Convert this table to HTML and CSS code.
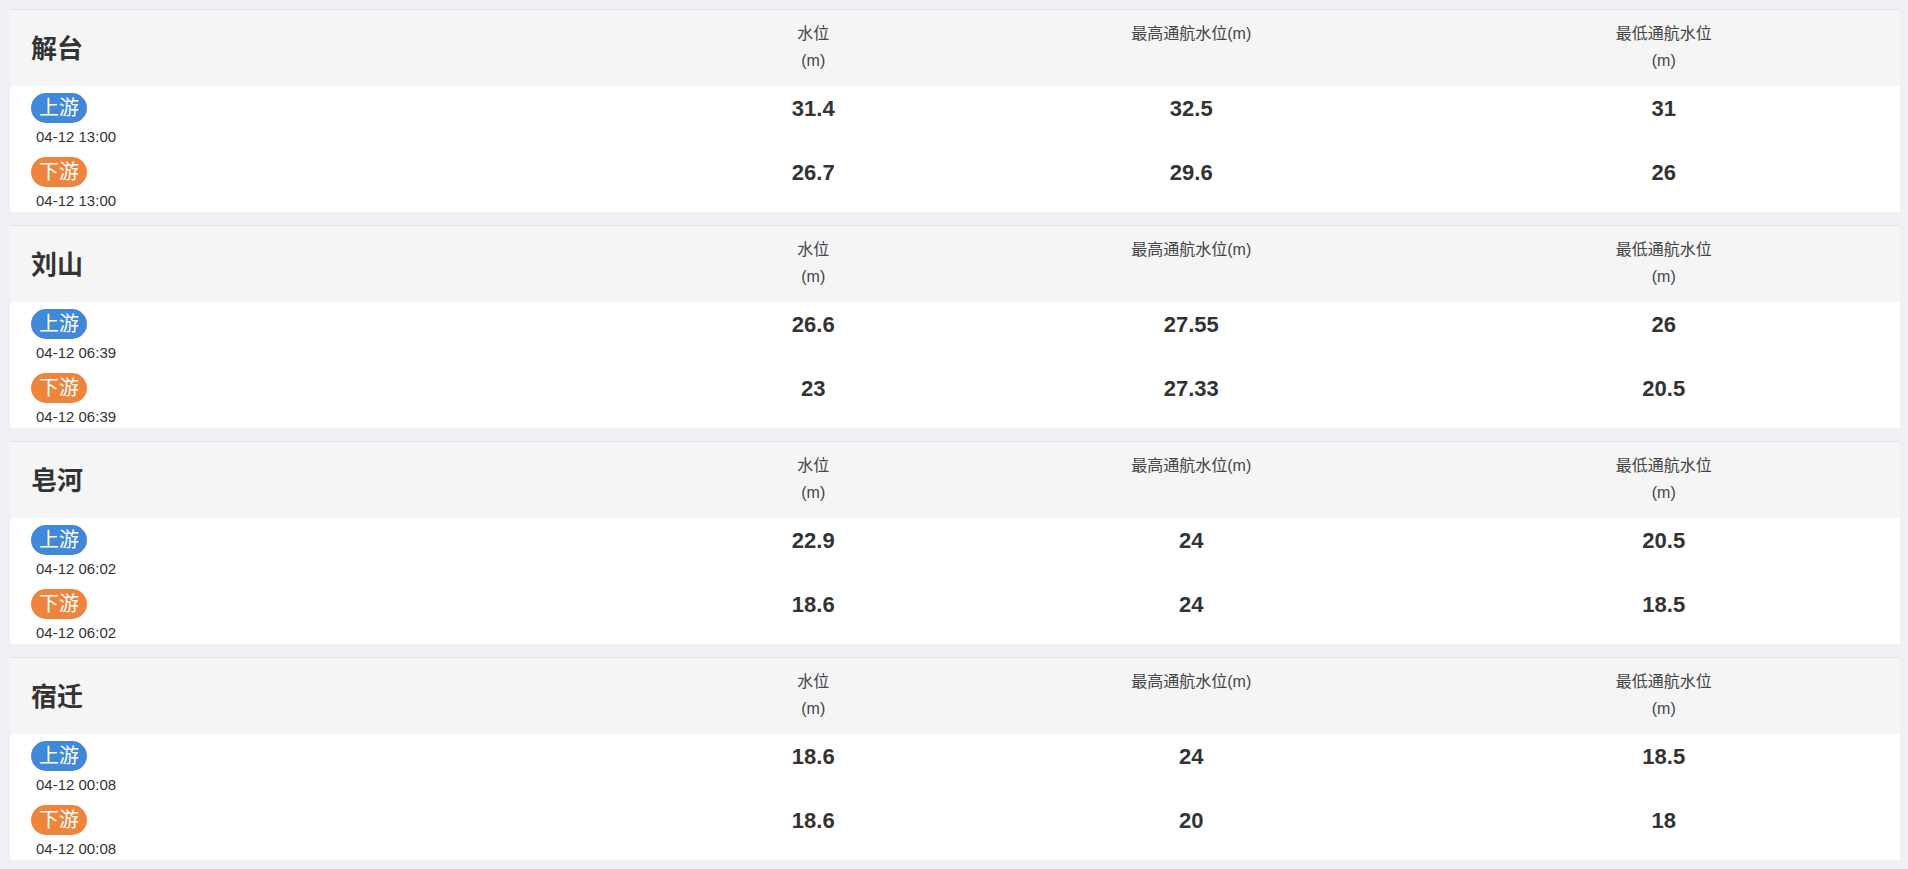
FILE: index.html
```html
<!DOCTYPE html>
<html lang="zh-CN">
<head>
<meta charset="utf-8">
<title>水位</title>
<link rel="stylesheet" href="styles.css">
</head>
<body>
<div class="list">
  <section class="card">
    <div class="head">
      <div class="name">解台</div>
      <div class="col">水位<br>(m)</div>
      <div class="col">最高通航水位(m)</div>
      <div class="col">最低通航水位<br>(m)</div>
    </div>
    <div class="body">
      <div class="row">
        <div class="side"><span class="tag up">上游</span><div class="time">04-12 13:00</div></div>
        <div class="val">31.4</div><div class="val">32.5</div><div class="val">31</div>
      </div>
      <div class="row">
        <div class="side"><span class="tag down">下游</span><div class="time">04-12 13:00</div></div>
        <div class="val">26.7</div><div class="val">29.6</div><div class="val">26</div>
      </div>
    </div>
  </section>
  <section class="card">
    <div class="head">
      <div class="name">刘山</div>
      <div class="col">水位<br>(m)</div>
      <div class="col">最高通航水位(m)</div>
      <div class="col">最低通航水位<br>(m)</div>
    </div>
    <div class="body">
      <div class="row">
        <div class="side"><span class="tag up">上游</span><div class="time">04-12 06:39</div></div>
        <div class="val">26.6</div><div class="val">27.55</div><div class="val">26</div>
      </div>
      <div class="row">
        <div class="side"><span class="tag down">下游</span><div class="time">04-12 06:39</div></div>
        <div class="val">23</div><div class="val">27.33</div><div class="val">20.5</div>
      </div>
    </div>
  </section>
  <section class="card">
    <div class="head">
      <div class="name">皂河</div>
      <div class="col">水位<br>(m)</div>
      <div class="col">最高通航水位(m)</div>
      <div class="col">最低通航水位<br>(m)</div>
    </div>
    <div class="body">
      <div class="row">
        <div class="side"><span class="tag up">上游</span><div class="time">04-12 06:02</div></div>
        <div class="val">22.9</div><div class="val">24</div><div class="val">20.5</div>
      </div>
      <div class="row">
        <div class="side"><span class="tag down">下游</span><div class="time">04-12 06:02</div></div>
        <div class="val">18.6</div><div class="val">24</div><div class="val">18.5</div>
      </div>
    </div>
  </section>
  <section class="card">
    <div class="head">
      <div class="name">宿迁</div>
      <div class="col">水位<br>(m)</div>
      <div class="col">最高通航水位(m)</div>
      <div class="col">最低通航水位<br>(m)</div>
    </div>
    <div class="body">
      <div class="row">
        <div class="side"><span class="tag up">上游</span><div class="time">04-12 00:08</div></div>
        <div class="val">18.6</div><div class="val">24</div><div class="val">18.5</div>
      </div>
      <div class="row">
        <div class="side"><span class="tag down">下游</span><div class="time">04-12 00:08</div></div>
        <div class="val">18.6</div><div class="val">20</div><div class="val">18</div>
      </div>
    </div>
  </section>
</div>
</body>
</html>
```
FILE: styles.css
```css
html, body {
  margin: 0;
  padding: 0;
  background: #efeff4;
}
body {
  font-family: "Liberation Sans", Arial, "Noto Sans CJK SC", sans-serif;
  color: #333;
}
.list {
  padding: 9px 8px 8px 10px;
  display: flex;
  flex-direction: column;
  gap: 13px;
}
.card {
  background: #fff;
  border-top: 1px solid #e4e4e8;
}
.head,
.row {
  display: grid;
  grid-template-columns: 35% 15% 25% 25%;
}
.head {
  background: #f5f5f6;
  height: 76px;
}
.name {
  align-self: center;
  padding-left: 21px;
  font-size: 26px;
  font-weight: bold;
  color: #333;
  margin-top: -4px;
}
.col {
  text-align: center;
  font-size: 16px;
  line-height: 27px;
  padding-top: 10px;
  color: #444;
}
.body {
  padding: 7px 0 3px;
  display: flex;
  flex-direction: column;
  gap: 12px;
}
.side {
  padding-left: 21px;
}
.tag {
  display: inline-block;
  height: 30px;
  line-height: 30px;
  padding: 0 8px;
  border-radius: 15px;
  color: #fff;
  font-size: 20px;
}
.tag.up {
  background: #4088dc;
}
.tag.down {
  background: #f0843c;
}
.time {
  margin-top: 5px;
  padding-left: 5px;
  font-size: 15px;
  line-height: 17px;
  color: #333;
}
.val {
  text-align: center;
  height: 30px;
  line-height: 31px;
  font-size: 22px;
  font-weight: bold;
  color: #333;
}
```
